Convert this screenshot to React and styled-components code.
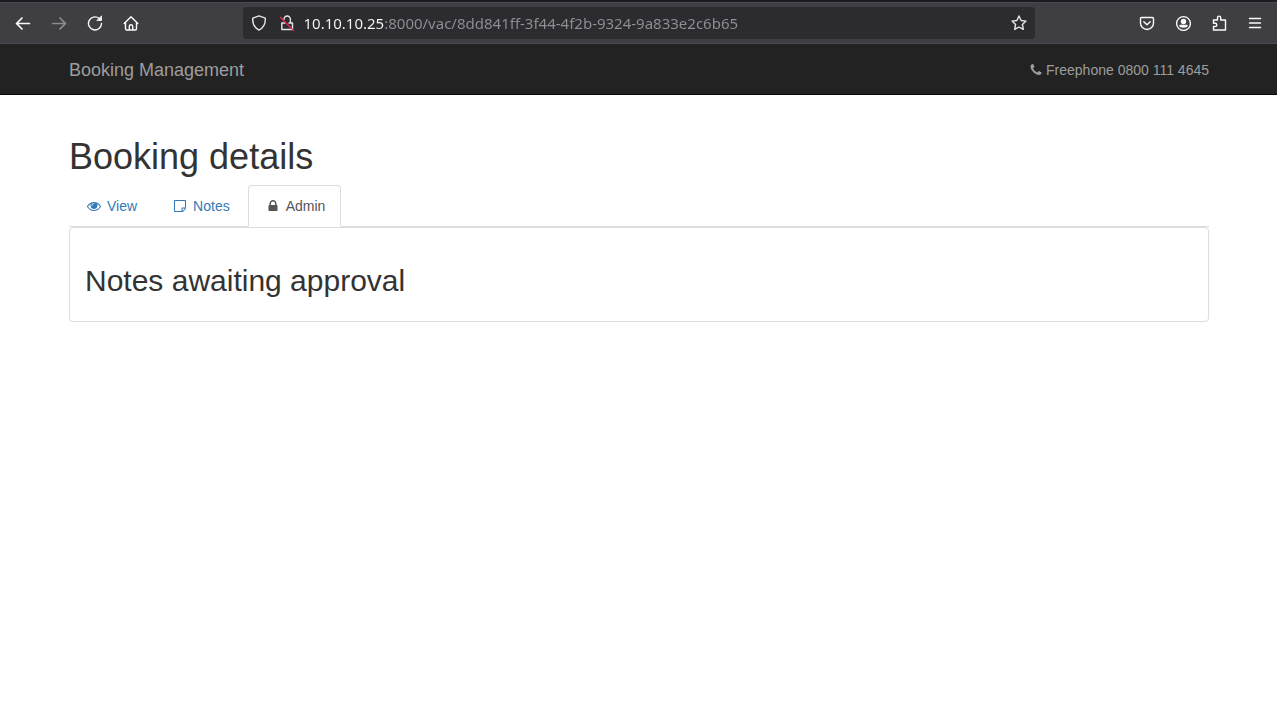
import React, { useState } from 'react';
import styled, { createGlobalStyle } from 'styled-components';

const GlobalStyle = createGlobalStyle`
  * {
    box-sizing: border-box;
  }

  body {
    margin: 0;
    background: #fff;
    color: #333;
    font-family: "Liberation Sans", Helvetica, Arial, sans-serif;
    font-size: 14px;
    line-height: 20px;
  }
`;

const TabStrip = styled.div`
  height: 3px;
  background: #1c1b22;
  border-bottom: 1px solid #4a4a55;
`;

const Toolbar = styled.div`
  display: flex;
  align-items: center;
  justify-content: space-between;
  height: 41px;
  padding: 0 4px;
  background: #3e3e43;
  border-bottom: 1px solid #4a4a55;
`;

const ToolbarGroup = styled.div`
  display: flex;
  flex: 1;
  justify-content: ${(props) => (props.$end ? 'flex-end' : 'flex-start')};
  padding-left: 1px;
`;

const ToolButton = styled.button`
  display: flex;
  align-items: center;
  justify-content: center;
  width: 36px;
  height: 32px;
  padding: 0;
  border: none;
  background: none;
  color: ${(props) => (props.disabled ? '#8b8b90' : '#fbfbfe')};
`;

const AddressBar = styled.div`
  display: flex;
  align-items: center;
  flex: 0 1 792px;
  height: 32px;
  padding: 0 2px;
  border-radius: 4px;
  background: #2b2b30;
`;

const AddressButton = styled.button`
  display: flex;
  align-items: center;
  justify-content: center;
  width: 28px;
  height: 28px;
  padding: 0;
  border: none;
  background: none;
  color: #e6e6ea;
`;

/* host part is bright, the rest of the address is dimmed */
const AddressInput = styled.input`
  flex: 1;
  min-width: 0;
  height: 28px;
  margin-left: 3px;
  padding: 0;
  border: none;
  outline: none;
  font-family: "Noto Sans", sans-serif;
  font-size: 15px;
  color: transparent;
  background: linear-gradient(to right, #fbfbfe 80px, #8f8f94 80px);
  background-clip: text;
  -webkit-background-clip: text;
`;

const Container = styled.div`
  max-width: 1171px;
  margin: 0 auto;
  padding: 0 15px 0 16px;
`;

const Navbar = styled.nav`
  background: #222;
  border-bottom: 1px solid #080808;
`;

const NavbarContent = styled(Container)`
  display: flex;
  align-items: center;
  justify-content: space-between;
  height: 50px;
  padding-top: 2px;
`;

const Brand = styled.a`
  font-size: 18px;
  color: #9d9d9d;
  text-decoration: none;
`;

const Phone = styled.p`
  display: flex;
  align-items: center;
  gap: 3px;
  margin: 0;
  color: #9d9d9d;
`;

const Heading = styled.h1`
  margin: 42px 0 8px;
  font-size: 36px;
  font-weight: normal;
  line-height: 40px;
`;

const Tabs = styled.div`
  display: flex;
  gap: 2px;
  border-bottom: 1px solid #ddd;
`;

const Tab = styled.button`
  display: flex;
  align-items: center;
  gap: 4px;
  margin-bottom: -1px;
  padding: 10px 15px;
  border: 1px solid ${(props) => (props.$active ? '#ddd' : 'transparent')};
  border-bottom-color: ${(props) => (props.$active ? '#fff' : 'transparent')};
  border-radius: 4px 4px 0 0;
  background: ${(props) => (props.$active ? '#fff' : 'none')};
  color: ${(props) => (props.$active ? '#555' : '#337ab7')};
  font: inherit;
  cursor: pointer;
`;

const TabIcon = styled.span`
  display: flex;
  justify-content: center;
  width: 18px;
`;

const Panel = styled.section`
  padding: 15px;
  border: 1px solid #ddd;
  border-radius: 4px;
  box-shadow: 0 1px 1px rgba(0, 0, 0, 0.05);
`;

const PanelHeading = styled.h2`
  margin: 21px 0 9px;
  font-size: 30px;
  font-weight: normal;
  line-height: 33px;
`;

const LineIcon = ({ children }) => (
  <svg
    width="16"
    height="16"
    viewBox="0 0 16 16"
    fill="none"
    stroke="currentColor"
    strokeWidth="1.4"
    strokeLinecap="round"
    strokeLinejoin="round"
    aria-hidden="true"
  >
    {children}
  </svg>
);

const SolidIcon = ({ d }) => (
  <svg width="14" height="14" viewBox="0 0 1792 1792" fill="currentColor" fillRule="evenodd" aria-hidden="true">
    <path d={d} />
  </svg>
);

const icons = {
  eye: 'M1664 960q-152-236-381-353 61 104 61 225 0 185-131.5 316.5t-316.5 131.5-316.5-131.5-131.5-316.5q0-121 61-225-229 117-381 353 133 205 333.5 326.5t434.5 121.5 434.5-121.5 333.5-326.5zm-720-384q0-20-14-34t-34-14q-125 0-214.5 89.5t-89.5 214.5q0 20 14 34t34 14 34-14 14-34q0-86 61-147t147-61q20 0 34-14t14-34zm848 384q0 34-20 69-140 230-376.5 368.5t-499.5 138.5-499.5-139-376.5-368q-20-35-20-69t20-69q140-229 376.5-368t499.5-139 499.5 139 376.5 368q20 35 20 69z',
  note: 'M224 128H1568q40 0 68 28t28 68V1160q0 90-76 164l-264 264q-74 76-164 76H224q-40 0-68-28t-28-68V224q0-40 28-68t68-28zM256 256V1536H1088V1184q0-40 28-68t68-28H1536V256zM1216 1216V1530L1530 1216z',
  lock: 'M640 768h512v-192q0-106-75-181t-181-75-181 75-75 181v192zm832 96v576q0 40-28 68t-68 28h-960q-40 0-68-28t-28-68v-576q0-40 28-68t68-28h32v-192q0-184 132-316t316-132 316 132 132 316v192h32q40 0 68 28t28 68z',
  phone: 'M1600 1240q0 27-10 70.5t-21 68.5q-21 50-122 106-94 51-186 51-27 0-53-3.5t-57.5-12.5-47-14.5-55.5-20.5-49-18q-98-35-175-83-127-79-264-216t-216-264q-48-77-83-175-3-9-18-49t-20.5-55.5-14.5-47-12.5-57.5-3.5-53q0-92 51-186 56-101 106-122 25-11 68.5-21t70.5-10q14 0 21 3 18 6 53 76 11 19 30 54t35 63.5 31 53.5q3 4 17.5 25t21.5 35.5 7 28.5q0 20-28.5 50t-62 55-62 53-28.5 46q0 9 5 22.5t8.5 20.5 14 24 11.5 19q76 137 174 235t235 174q2 1 19 11.5t24 14 20.5 8.5 22.5 5q18 0 46-28.5t53-62 55-62 50-28.5q14 0 28.5 7t35.5 21.5 25 17.5q25 15 53.5 31t63.5 35 54 30q70 35 76 53 3 7 3 21z',
};

const tabs = [
  { name: 'View', icon: icons.eye },
  { name: 'Notes', icon: icons.note },
  { name: 'Admin', icon: icons.lock },
];

const BrowserToolbar = () => {
  const [address, setAddress] = useState('10.10.10.25:8000/vac/8dd841ff-3f44-4f2b-9324-9a833e2c6b65');

  return (
    <>
      <TabStrip />
      <Toolbar>
        <ToolbarGroup>
          <ToolButton aria-label="Back">
            <LineIcon><path d="M14.500 8.500H1.500M7 3L1.500 8.500 7 14" strokeWidth="1.700" /></LineIcon>
          </ToolButton>
          <ToolButton aria-label="Forward" disabled>
            <LineIcon><path d="M1.500 8.500h13M9 3l5.500 5.500L9 14" strokeWidth="1.700" /></LineIcon>
          </ToolButton>
          <ToolButton aria-label="Reload">
            <LineIcon>
              <path d="M14.500 8.500A6.500 6.500 0 1 1 12 3.300" />
              <path d="M14.500 1.200v4.300h-4.300z" fill="currentColor" strokeWidth="0.800" />
            </LineIcon>
          </ToolButton>
          <ToolButton aria-label="Home">
            <LineIcon>
              <path d="M1.200 8.500L8 1.800l6.800 6.700M2.500 7.500v6.200q0 1.300 1.300 1.300h8.400q1.300 0 1.300-1.300V7.500M6.300 15v-3.500a1.700 1.700 0 0 1 3.400 0V15" />
            </LineIcon>
          </ToolButton>
        </ToolbarGroup>
        <AddressBar>
          <AddressButton aria-label="Tracking protection">
            <LineIcon>
              <path d="M8 .9l6.300 2.300c.3 5.300-1.500 9.600-6.300 11.900C3.200 12.800 1.400 8.500 1.700 3.200z" />
            </LineIcon>
          </AddressButton>
          <AddressButton aria-label="Connection is not secure">
            <LineIcon>
              <path d="M5 4.200a3.200 3.200 0 0 1 6.400 0V7.500M6 8H2.800v6.500h10.700V8H10" />
              <path d="M1.500 2.500l13 13" stroke="#e22850" />
            </LineIcon>
          </AddressButton>
          <AddressInput
            aria-label="Address"
            value={address}
            spellCheck={false}
            onChange={(e) => setAddress(e.target.value)}
          />
          <AddressButton aria-label="Bookmark this page">
            <LineIcon>
              <path d="M8 1l2.100 4.500 4.900.600-3.600 3.400.9 4.900L8 12l-4.300 2.400.9-4.900L1 6.100l4.900-.6z" />
            </LineIcon>
          </AddressButton>
        </AddressBar>
        <ToolbarGroup $end>
          <ToolButton aria-label="Save to Pocket">
            <LineIcon>
              <path d="M2.500 2.500h11q1 0 1 1V8a6.500 6.500 0 0 1-13 0V3.500q0-1 1-1zM4.800 6.800L8 9.800l3.200-3" />
            </LineIcon>
          </ToolButton>
          <ToolButton aria-label="Account">
            <LineIcon>
              <circle cx="8.500" cy="8.500" r="6.900" />
              <circle cx="8.500" cy="6.500" r="2" fill="currentColor" />
              <path d="M5 10.500h7c0 2-7 2-7 0z" fill="currentColor" />
            </LineIcon>
          </ToolButton>
          <ToolButton aria-label="Extensions">
            <LineIcon>
              <path d="M2.500 5h4V2.700a1.600 1.600 0 0 1 3.200 0V5h4.800v10H2.500v-3.500h1.700a1.600 1.600 0 0 0 0-3.200H2.500z" />
            </LineIcon>
          </ToolButton>
          <ToolButton aria-label="Menu">
            <LineIcon><path d="M2.500 3.500h11M2.500 8h11M2.500 12.500h11" /></LineIcon>
          </ToolButton>
        </ToolbarGroup>
      </Toolbar>
    </>
  );
};

const App = () => {
  const [activeTab, setActiveTab] = useState('Admin');

  return (
    <>
      <GlobalStyle />
      <BrowserToolbar />
      <Navbar>
        <NavbarContent>
          <Brand href="#">Booking Management</Brand>
          <Phone>
            <SolidIcon d={icons.phone} />
            Freephone 0800 111 4645
          </Phone>
        </NavbarContent>
      </Navbar>
      <Container as="main">
        <Heading>Booking details</Heading>
        <Tabs role="tablist">
          {tabs.map((tab) => (
            <Tab
              key={tab.name}
              role="tab"
              aria-selected={tab.name === activeTab}
              $active={tab.name === activeTab}
              onClick={() => setActiveTab(tab.name)}
            >
              <TabIcon><SolidIcon d={tab.icon} /></TabIcon>
              {tab.name}
            </Tab>
          ))}
        </Tabs>
        <Panel>
          <PanelHeading>Notes awaiting approval</PanelHeading>
        </Panel>
      </Container>
    </>
  );
};

export default App;
